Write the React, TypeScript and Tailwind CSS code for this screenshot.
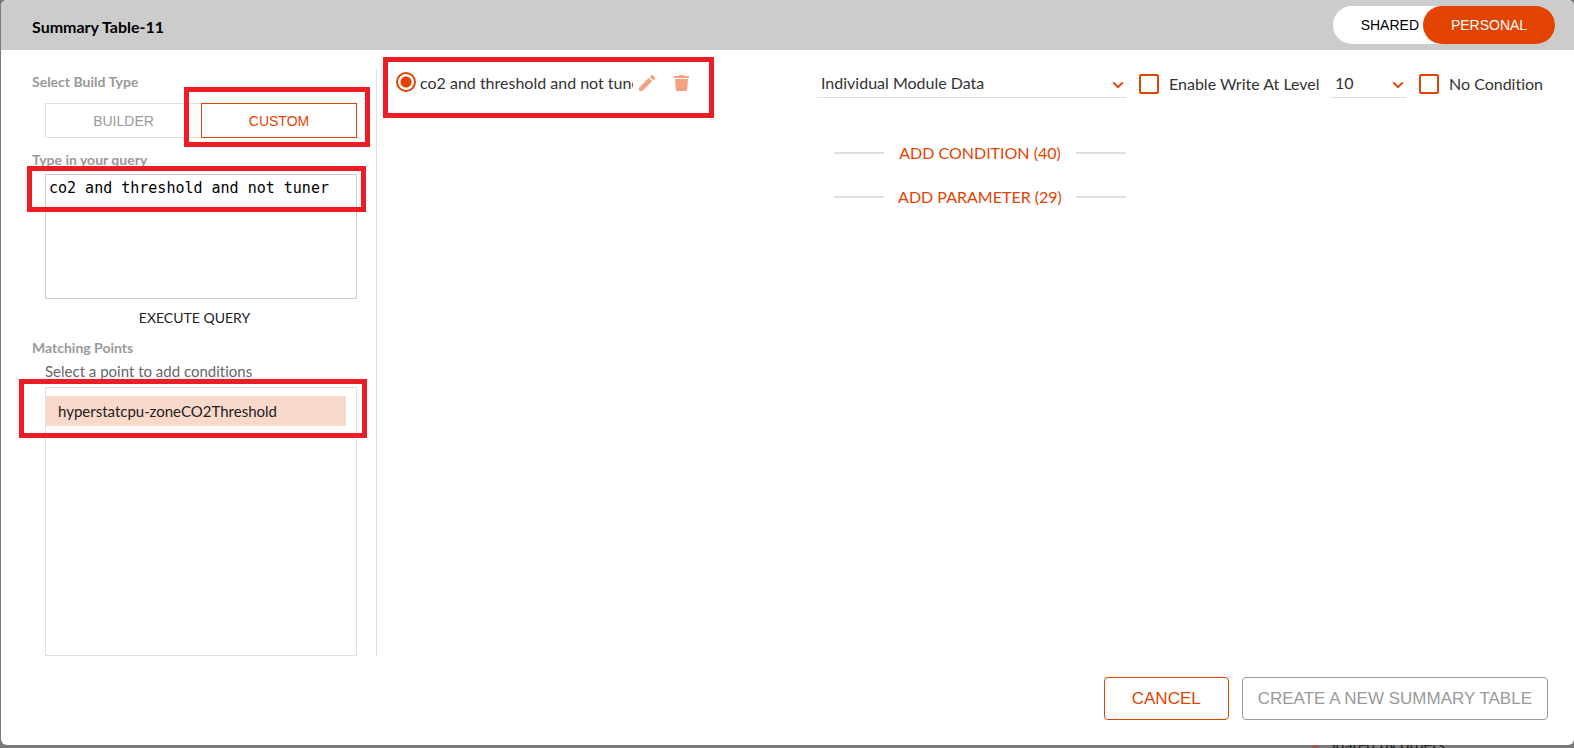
import { useState } from "react";
import type { ReactNode } from "react";

function Highlight({ className }: { className: string }) {
  return <div className={`pointer-events-none absolute z-10 border-5 border-[#ee1c25] ${className}`} />;
}

function SectionTitle({ children, htmlFor }: { children: ReactNode; htmlFor?: string }) {
  const style = "block text-sm leading-5 font-bold text-[#999]";
  return htmlFor ? (
    <label htmlFor={htmlFor} className={style}>{children}</label>
  ) : (
    <h2 className={style}>{children}</h2>
  );
}

function Chevron() {
  return (
    <svg viewBox="0 0 12 8" className="pointer-events-none absolute top-3 right-0.5 h-2 w-3" fill="none" stroke="#e24301" strokeWidth="2">
      <path d="M1.2 1.4 6 6.2l4.8-4.8" />
    </svg>
  );
}

function CheckOption({ label }: { label: string }) {
  return (
    <label className="flex items-center gap-2.5 whitespace-nowrap">
      <input type="checkbox" className="size-5 shrink-0 appearance-none rounded-xs border-2 border-[#e24301] checked:bg-[#e24301]" />
      {label}
    </label>
  );
}

function AddRow({ label }: { label: string }) {
  return (
    <div className="flex items-center justify-between whitespace-nowrap">
      <span className="h-0.5 w-[50px] bg-[#e0e0e0]" />
      <button type="button" className="text-base leading-6 text-[#e24301]">{label}</button>
      <span className="h-0.5 w-[50px] bg-[#e0e0e0]" />
    </div>
  );
}

export default function App() {
  const [query, setQuery] = useState("co2 and threshold and not tuner");

  return (
    <div className="relative flex h-screen flex-col overflow-hidden bg-[#7a7a7a] pl-px font-['Lato',sans-serif] text-base text-[#333] [font-variant-ligatures:none]">
      <main className="relative z-10 mb-[3px] flex min-h-0 flex-1 flex-col overflow-hidden rounded-md bg-white">
        <header className="flex h-[50px] shrink-0 items-center justify-between bg-[#ccc] pr-[19px] pl-[31px]">
          <h1 className="pt-1 text-base font-bold text-black">Summary Table-11</h1>
          <div className="flex h-[38px] rounded-full bg-white font-['Liberation_Sans',sans-serif] text-sm">
            <button type="button" className="pr-1 pl-7 text-black">SHARED</button>
            <button type="button" className="w-[132px] rounded-full bg-[#e24301] text-white">PERSONAL</button>
          </div>
        </header>

        <div className="flex min-h-0 flex-1 pt-[19px]">
          <aside className="flex w-[376px] shrink-0 flex-col border-r border-[#e0e0e0] pr-[19px] pl-[31px]">
            <div className="pt-[3px]">
              <SectionTitle>Select Build Type</SectionTitle>
            </div>
            <div className="mt-[11px] ml-[13px] flex h-[35px] font-['Liberation_Sans',sans-serif] text-sm">
              <button type="button" className="w-1/2 border border-r-0 border-[#e0e0e0] text-[#999]">BUILDER</button>
              <div className="relative flex w-1/2">
                <button type="button" className="flex-1 border border-[#e24301] text-[#e24301]">CUSTOM</button>
                <Highlight className="-top-4 -right-[13px] -bottom-[9px] -left-[17px]" />
              </div>
            </div>
            <div className="mt-3">
              <SectionTitle htmlFor="query">Type in your query</SectionTitle>
            </div>
            <div className="relative mt-1 ml-[13px]">
              <textarea
                id="query"
                value={query}
                onChange={(event) => setQuery(event.target.value)}
                spellCheck={false}
                className="block h-[125px] w-full resize-none border border-[#ccc] px-[3px] py-1 font-['DejaVu_Sans_Mono',monospace] text-[15px] leading-[18px] text-black outline-none"
              />
              <Highlight className="-top-2 -right-[9px] -left-[18px] h-[46px]" />
            </div>
            <button type="button" className="mt-[9px] self-center text-sm leading-5 text-[#222]">EXECUTE QUERY</button>
            <div className="mt-2.5">
              <SectionTitle>Matching Points</SectionTitle>
            </div>
            <p className="mt-[3px] ml-[13px] text-[15px] leading-5 text-[#666]">Select a point to add conditions</p>
            <div className="relative mt-1.5 ml-[13px] min-h-0 flex-1 border border-[#e0e0e0] pt-2 pr-2.5">
              <button type="button" className="block h-[30px] w-full bg-[#f9d9cc] px-3 text-left text-[15px] text-[#222]">hyperstatcpu-zoneCO2Threshold</button>
              <Highlight className="-top-[9px] -right-[11px] -left-[27px] h-[59px]" />
            </div>
          </aside>

          <section className="min-w-0 flex-1 pl-1.5">
            <div className="relative -mt-3 flex h-[61px] w-[331px] items-start pt-3.5 pl-[13px]">
              <Highlight className="inset-0" />
              <label className="flex w-[237px] items-start gap-1 overflow-hidden whitespace-nowrap">
                <input type="radio" name="query" defaultChecked className="mt-px size-5 shrink-0 appearance-none rounded-full border-2 border-[#e24301] bg-[radial-gradient(circle,#e24301_5px,transparent_6px)]" />
                <span className="overflow-hidden leading-6">co2 and threshold and not tuner</span>
              </label>
              <button type="button" aria-label="Edit query" className="mt-1 ml-1.5">
                <svg viewBox="3 3 18 18" className="size-4" fill="#f3a180">
                  <path d="M3 17.25V20a1 1 0 0 0 1 1h2.75L17.81 9.94l-3.75-3.75L3 17.25zM20.5 7.5a1.6 1.6 0 0 0 0-2.2L18.7 3.5a1.6 1.6 0 0 0-2.2 0l-1.37 1.62 3.75 3.75z" />
                </svg>
              </button>
              <button type="button" aria-label="Delete query" className="mt-1 ml-[19px]">
                <svg viewBox="0 0 15 16" className="h-4 w-[15px]" fill="#f3a180">
                  <path d="M0 1h4.500l1-1h4l1 1H15v2H0zM1 4h13l-.8 10.500q-.1 1.500-1.500 1.500H3.300q-1.400 0-1.500-1.500z" />
                </svg>
              </button>
            </div>
          </section>

          <section className="w-[757px] shrink-0">
            <div className="flex items-start">
              <div className="relative w-[309px]">
                <select aria-label="Data type" className="block h-[29px] w-full appearance-none border-b border-[#e0e0e0] px-1 outline-none">
                  <option>Individual Module Data</option>
                </select>
                <Chevron />
              </div>
              <div className="mt-[3px] ml-[13px] w-[184px]">
                <CheckOption label="Enable Write At Level" />
              </div>
              <div className="relative ml-2 w-[75px]">
                <select aria-label="Write level" className="block h-[29px] w-full appearance-none border-b border-[#e0e0e0] px-1 outline-none">
                  <option>10</option>
                </select>
                <Chevron />
              </div>
              <div className="mt-[3px] ml-[13px]">
                <CheckOption label="No Condition" />
              </div>
            </div>
            <div className="mt-[43px] ml-[17px] flex w-[292px] flex-col gap-5">
              <AddRow label="ADD CONDITION (40)" />
              <AddRow label="ADD PARAMETER (29)" />
            </div>
          </section>
        </div>

        <footer className="flex h-[89px] shrink-0 items-start justify-end gap-[13px] pt-[21px] pr-[26px] font-['Liberation_Sans',sans-serif] text-[17px]">
          <button type="button" className="h-[43px] w-[125px] rounded border border-[#e24301] text-[#e24301]">CANCEL</button>
          <button type="button" disabled className="h-[43px] rounded border border-[#999] px-[15px] text-[#999]">CREATE A NEW SUMMARY TABLE</button>
        </footer>
      </main>
      {/* page content peeking out under the dialog */}
      <div className="absolute -bottom-1.5 left-[1313px] flex items-end gap-2 text-base leading-5 text-[#222]">
        <span className="mb-1 h-3 w-1.5 -skew-x-12 bg-[#a05a45]" />
        <span>Shared by others</span>
      </div>
    </div>
  );
}
